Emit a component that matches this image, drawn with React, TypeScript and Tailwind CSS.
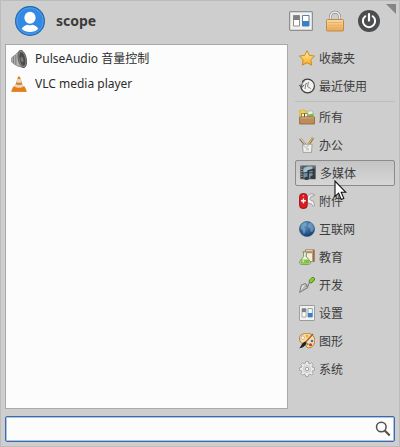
import { useState } from "react";
import type { ReactNode } from "react";

function StarIcon() {
  return (
    <svg viewBox="0 0 16 16" className="size-4 shrink-0" aria-hidden="true">
      <defs>
        <linearGradient id="star" x1="0" y1="0" x2="0" y2="1">
          <stop offset="0" stopColor="#fff0a0" />
          <stop offset="1" stopColor="#f9a825" />
        </linearGradient>
      </defs>
      <path d="M8 .6l2.3 4.8 5.3.7-3.8 3.7.9 5.4L8 12.7l-4.7 2.5.9-5.4L.4 6.1l5.3-.7z" fill="url(#star)" stroke="#d08a1c" strokeWidth="1" strokeLinejoin="round" />
    </svg>
  );
}

function HistoryIcon() {
  return (
    <svg viewBox="0 0 16 16" className="size-4 shrink-0" fill="none" aria-hidden="true">
      <circle cx="8.6" cy="8" r="6.8" fill="#f1f1ee" stroke="#3c3c3c" strokeWidth="1.2" />
      <path d="M1.8 3.4l1.6 6" stroke="#cecece" strokeWidth="2.2" />
      <path d="M0 6.8l2.6 3 2.6-3M2.6 9.4C2.4 6 3.6 4 5.6 3" stroke="#555" strokeWidth="1" />
      <path d="M9.4 3.8L8.6 8.6l3.2 2M6.8 5.6h1.4M6.8 5.6L6 11" stroke="#777" strokeWidth=".9" />
    </svg>
  );
}

function AllIcon() {
  return (
    <svg viewBox="0 0 16 16" className="size-4 shrink-0" aria-hidden="true">
      <path d="M.6 1.2l2 .8L4.6.4 5.6 2l2-.2-.8 2.4.4 2.8H.8z" fill="#f3d43c" stroke="#c9a11f" strokeWidth=".5" />
      <path d="M2.2 4.2h11.3v4H2.2z" fill="#6b5130" />
      <path d="M2.8 4.8H5v3H2.8zM6 4.8h2v3H6z" fill="#f5f0df" />
      <path d="M9.2 2h4.4l1 5.5H8.2z" fill="#edf2e6" stroke="#9aa58d" strokeWidth=".6" />
      <path d="M8.5 5.6l6-1v3.2h-6z" fill="#83b849" />
      <path d="M.6 8h14.9v7H.6z" fill="#bd8c58" stroke="#8d6638" strokeWidth=".8" />
      <path d="M1.3 8.9h13.4" stroke="#dfbb8a" strokeWidth=".8" />
    </svg>
  );
}

function OfficeIcon() {
  return (
    <svg viewBox="0 0 16 16" className="size-4 shrink-0" fill="none" aria-hidden="true">
      <path d="M1 1.4l6.4 7.8" stroke="#77705f" strokeWidth="2.4" />
      <path d="M1.2 1.2l6 7.3" stroke="#e2d3a8" strokeWidth="1.1" />
      <path d="M14 .8L8.4 9.5" stroke="#8d6a2c" strokeWidth="2.3" />
      <path d="M13.8.8L8.4 8.8" stroke="#eebf58" strokeWidth="1.1" />
      <path d="M3.5 7.2h9.6l-.6 8.2H4.1z" fill="#f4f4f4" fillOpacity=".9" stroke="#9a9a9a" strokeWidth=".9" />
      <path d="M3.8 7.8l3.4 3L9.6 8" stroke="#b0ada5" strokeWidth=".9" />
      <path d="M7.3 11h2.6v2.4H7.3z" fill="#c4c4c4" />
    </svg>
  );
}

function MediaIcon() {
  return (
    <svg viewBox="0 0 16 16" className="size-4 shrink-0" aria-hidden="true">
      <path d="M.4.6h15.2v13.6H.4z" fill="#34383b" />
      <path d="M3.4 1.4h9.2v5.8H3.4zM3.4 8.2h9.2v5.2H3.4z" fill="#6f91a5" />
      <path d="M3.4 4l4-2.6h5.2v2L5 7.2H3.4z" fill="#a9c0cc" />
      <path d="M1.9 1.2v12.6M14.1 1.2v10" stroke="#c9cccd" strokeWidth="1.1" strokeDasharray="1.3 1.1" />
      <path d="M8.2 12.8V5.8l5.8-1.4v7.4" fill="none" stroke="#262b2f" strokeWidth="1.3" />
      <ellipse cx="6.6" cy="13.4" rx="2.3" ry="1.7" fill="#343a3f" />
      <ellipse cx="12.6" cy="12.2" rx="2.3" ry="1.7" fill="#343a3f" />
    </svg>
  );
}

function KnifeIcon() {
  return (
    <svg viewBox="0 0 16 16" className="size-4 shrink-0" aria-hidden="true">
      <path d="M8 6L9 2.6l3-1.8 3.4.6-.6 1.6-2.6.2-1.6 3 1.4 1.4 2.4.6 1.4 4.4-1.8.6-1.6-2.4L8 9.8z" fill="#f3f3f2" stroke="#909090" strokeWidth=".8" />
      <rect x=".6" y=".6" width="7.6" height="14.8" rx="3" fill="#dc1e20" stroke="#990c12" strokeWidth=".9" />
      <path d="M4.4 5.4v4.8M2 7.8h4.8" stroke="#fff" strokeWidth="1.4" />
      <circle cx="4.4" cy="2.8" r=".7" fill="#ffb7b7" />
    </svg>
  );
}

function GlobeIcon() {
  return (
    <svg viewBox="0 0 16 16" className="size-4 shrink-0" aria-hidden="true">
      <defs>
        <radialGradient id="globe" cx=".4" cy=".25" r=".8">
          <stop offset="0" stopColor="#5e93c4" />
          <stop offset="1" stopColor="#123a6c" />
        </radialGradient>
      </defs>
      <circle cx="8" cy="8" r="7.6" fill="url(#globe)" stroke="#2b5785" strokeWidth=".6" />
      <path d="M2.4 3.8l3-2.2 2.4.4-.6 2.2L5 6.2l1.8 1.8L6 11.2l-1.2 2.2-1-3.6L1.4 7zM9.4 2.6l2.6-.8 2.4 2.8.6 3.2-1.8 3.4-1.6-.6-.6-3.2-2-1.4z" fill="#86b3cf" opacity=".6" />
    </svg>
  );
}

function EducationIcon() {
  return (
    <svg viewBox="0 0 16 16" className="size-4 shrink-0" aria-hidden="true">
      <path d="M6.4.8h9v11.8H8z" fill="#f3ecdd" stroke="#8f744f" strokeWidth=".8" />
      <path d="M13.4 1.2h1.8v11h-1.8z" fill="#9c6a3c" />
      <path d="M8 2.2h5v2H8z" fill="#b2845a" />
      <path d="M3.6 2.8h4.2M4.6 3v4.6L1 12c-1.2 2.2.2 3.4 1.8 3.4h6.4c2 0 3-1.4 2-3.2L7.2 7.6V3" fill="#eff6e6" stroke="#6b9149" strokeWidth=".9" />
      <path d="M2.6 10.6h7l1.2 2.2c.4 1.2-.4 1.9-1.6 1.9H2.8c-1.2 0-1.9-.8-1.4-1.9z" fill="#7fc243" />
      <circle cx="4.4" cy="12.2" r="1" fill="#dff3b9" />
    </svg>
  );
}

function DevelopIcon() {
  return (
    <svg viewBox="0 0 16 16" className="size-4 shrink-0" aria-hidden="true">
      <path d="M.6 15.4L2.4 8l4.2-1.6L9 10.6z" fill="#b4b7b3" stroke="#6a6e69" strokeWidth=".8" strokeLinejoin="round" />
      <path d="M1.4 14.2L3.2 8.8l2.8-1.2z" fill="#e9ebe7" />
      <path d="M7 9l2.2.2.2-2.4 1.8-1.2" fill="none" stroke="#777" strokeWidth="1" />
      <path d="M11.8 4.2l2-2" stroke="#4c8a14" strokeWidth="4.2" strokeLinecap="round" />
      <path d="M11.8 4l1.8-1.8" stroke="#8fcb42" strokeWidth="2.7" strokeLinecap="round" />
    </svg>
  );
}

function SettingsIcon({ large = false }: { large?: boolean }) {
  return (
    <svg viewBox="0 0 24 20" preserveAspectRatio="none" className={large ? "h-5 w-6" : "size-4 shrink-0"} aria-hidden="true">
      <rect x=".6" y=".6" width="22.8" height="18.8" rx="1" fill="#f1f1ef" stroke="#8c8f8d" strokeWidth="1.2" />
      <path d="M4.5 4.5h6v10.5h-6z" fill="#fff" stroke="#8b8e8c" strokeWidth="1" />
      <path d="M4.5 4.5h6v4.5h-6z" fill="#7d807e" />
      <path d="M13.5 4.5h6.5v10.5h-6.5z" fill="#fff" stroke="#5f7fa3" strokeWidth="1" />
      <path d="M13.5 10h6.5v5h-6.5z" fill="#377fca" />
    </svg>
  );
}

function PaletteIcon() {
  return (
    <svg viewBox="0 0 16 16" className="size-4 shrink-0" aria-hidden="true">
      <path d="M2 2C6-.8 13-.4 15.2 4.5c1.8 5-1 10.4-5.7 10.4-3 0-2-3.5-4-4.3C3.4 9.8 1 10.2.8 7.5.7 5.5-.2 3.8 2 2z" fill="#f7ddb0" stroke="#b57624" strokeWidth=".9" />
      <circle cx="3.8" cy="4.7" r="1.7" fill="#fff" stroke="#b98c48" strokeWidth=".6" />
      <circle cx="8" cy="3" r="1.5" fill="#f0b023" />
      <circle cx="13" cy="8" r="1.3" fill="#3a78bd" />
      <circle cx="11.5" cy="11.7" r="1.5" fill="#d43024" />
      <circle cx="8.5" cy="11.2" r="1.1" fill="#64a333" />
      <path d="M14 1L6 9.8" stroke="#a5651f" strokeWidth="1.5" />
      <path d="M6.2 8.4l1.5 1.4c-1 3-3.7 5.2-7.5 5.4 2.4-2 2-5.2 6-6.8z" fill="#222" />
    </svg>
  );
}

function GearIcon() {
  return (
    <svg viewBox="0 0 16 16" className="size-4 shrink-0" aria-hidden="true">
      <path d="M6.7.5h2.6l.4 2 1.2.5 1.8-1.2 1.5 1.5L13 5.1l.5 1.2 2 .4v2.6l-2 .4-.5 1.2 1.2 1.8-1.5 1.5-1.8-1.2-1.2.5-.4 2H6.7l-.4-2-1.2-.5-1.8 1.2-1.5-1.5L3 10.9l-.5-1.2-2-.4V6.7l2-.4L3 5.1 1.8 3.3l1.5-1.5L5.1 3l1.2-.5z" fill="#ebebeb" stroke="#9a9a9a" strokeWidth=".8" strokeLinejoin="round" />
      <circle cx="8" cy="8" r="3.6" fill="#dcdcdc" stroke="#bcbcbc" strokeWidth=".6" />
      <circle cx="8" cy="8" r="1.7" fill="#f6f6f6" stroke="#909090" strokeWidth=".8" />
    </svg>
  );
}

function SpeakerIcon() {
  return (
    <svg viewBox="0 0 16 20" className="h-5 w-4 shrink-0" aria-hidden="true">
      <path d="M1 8.4l3-2.2 5-4.6 4 17-6-1.4-4.5-2.6C0 13.2 0 10.4 1 8.4z" fill="#b4b4b1" stroke="#7a7a78" strokeWidth=".8" />
      <path d="M2.6 7.8v6M4.8 6.4v9" stroke="#6c6c6a" strokeWidth=".8" />
      <ellipse cx="11.3" cy="10" rx="4" ry="8.8" transform="rotate(-12 11.3 10)" fill="#8b8b89" stroke="#5a5a58" strokeWidth=".9" />
      <ellipse cx="11.4" cy="10" rx="2.8" ry="7.2" transform="rotate(-12 11.4 10)" fill="#4b4b4a" />
      <ellipse cx="11" cy="10.6" rx="1.3" ry="2.6" transform="rotate(-12 11 10.6)" fill="#7d7d7b" />
    </svg>
  );
}

function ConeIcon() {
  return (
    <svg viewBox="0 0 16 16" className="size-4 shrink-0" aria-hidden="true">
      <path d="M2.6 10.8h10.8l2 4.6H.6z" fill="#ed8009" stroke="#c86605" strokeWidth=".6" />
      <path d="M7.2.6h1.6l3.8 11.5c-2 1.6-7.2 1.6-9.2 0z" fill="#e87a10" />
      <path d="M6.4 3h3.2l1.1 3.2c-1.4.8-4 .8-5.4 0zM4.6 8.3c1.8.9 5 .9 6.8 0l.8 2.4c-2 1.3-6.4 1.3-8.4 0z" fill="#ddd8d2" />
    </svg>
  );
}

function AvatarIcon() {
  return (
    <svg viewBox="0 0 30 30" className="size-[30px]" aria-hidden="true">
      <circle cx="15" cy="15" r="14.4" fill="#348ae2" stroke="#2368af" strokeWidth="1.2" />
      <circle cx="15" cy="15" r="13.2" fill="none" stroke="#58a3ee" strokeWidth=".8" />
      <ellipse cx="15" cy="11.8" rx="5.6" ry="6" fill="#fff" />
      <path d="M6.7 22.8c1.2-2.4 4-3.5 5.8-4.1 1.6.8 3.4.8 5 0 1.8.6 4.6 1.7 5.8 4.1-4.1 4.4-12.5 4.4-16.6 0z" fill="#fff" />
    </svg>
  );
}

function LockIcon() {
  return (
    <svg viewBox="0 0 20 22" className="h-[22px] w-5" aria-hidden="true">
      <defs>
        <linearGradient id="lock" x1="0" y1="0" x2="0" y2="1">
          <stop offset="0" stopColor="#fbd9a0" />
          <stop offset="1" stopColor="#eba950" />
        </linearGradient>
      </defs>
      <path d="M5.5 11V6.6C5.5.8 14.5.8 14.5 6.6V11" fill="none" stroke="#8f918e" strokeWidth="3" />
      <path d="M5.5 11V6.6C5.5.8 14.5.8 14.5 6.6V11" fill="none" stroke="#e9eae7" strokeWidth="1.6" />
      <rect x="1.5" y="9.5" width="17" height="11.5" rx="1" fill="url(#lock)" stroke="#bd8a48" />
      <path d="M3 12.5h14M3 15.2h14M3 18h14" stroke="#e3ac66" strokeWidth=".8" />
    </svg>
  );
}

function PowerIcon() {
  return (
    <svg viewBox="0 0 24 24" className="size-6" fill="none" aria-hidden="true">
      <circle cx="12" cy="12" r="11" fill="#4c4d4f" />
      <path d="M8.3 7.2a6.1 6.1 0 1 0 7.4 0" stroke="#fff" strokeWidth="2" strokeLinecap="round" />
      <path d="M12 5v6.6" stroke="#fff" strokeWidth="2.2" strokeLinecap="round" />
    </svg>
  );
}

type Category = { name: string; icon: ReactNode };

const shortcuts: Category[] = [
  { name: "收藏夹", icon: <StarIcon /> },
  { name: "最近使用", icon: <HistoryIcon /> },
];

const categories: Category[] = [
  { name: "所有", icon: <AllIcon /> },
  { name: "办公", icon: <OfficeIcon /> },
  { name: "多媒体", icon: <MediaIcon /> },
  { name: "附件", icon: <KnifeIcon /> },
  { name: "互联网", icon: <GlobeIcon /> },
  { name: "教育", icon: <EducationIcon /> },
  { name: "开发", icon: <DevelopIcon /> },
  { name: "设置", icon: <SettingsIcon /> },
  { name: "图形", icon: <PaletteIcon /> },
  { name: "系统", icon: <GearIcon /> },
];

function CategoryButton({ item, active, onSelect }: { item: Category; active: boolean; onSelect: () => void }) {
  return (
    <button
      type="button"
      aria-pressed={active}
      onClick={onSelect}
      className={
        "relative flex h-[26px] w-full items-center gap-1 rounded-[2px] border text-left " +
        (active ? "border-[#8b8b8b] bg-linear-to-b from-[#c4c4c4] to-[#d6d6d6] pl-1" : "border-transparent pl-[3px]")
      }
    >
      {item.icon}
      <span className="pt-0.5">{item.name}</span>
      {active && (
        <svg viewBox="0 0 13 21" className="pointer-events-none absolute top-[19px] left-[38px] z-10 h-[21px] w-[13px]" aria-hidden="true">
          <path d="M1 1v15.5l3.6-3.3 2.6 6.3 2.6-1.1-2.6-6.1h4.7z" fill="#fff" stroke="#111" strokeWidth="1.1" />
        </svg>
      )}
    </button>
  );
}

export default function App() {
  const [selected, setSelected] = useState("多媒体");
  const [query, setQuery] = useState("");

  return (
    <main className="relative flex min-h-screen flex-col border border-[#bcbcbc] bg-[#cecece] px-1 pb-1 font-['Noto_Sans','Noto_Sans_CJK_SC',sans-serif] text-xs text-[#3c3c3c]">
      <header className="flex h-[43px] shrink-0 items-center justify-between pr-[14px] pb-1 pl-[10px]">
        <div className="flex items-center gap-[11px]">
          <AvatarIcon />
          <h1 className="text-sm font-bold">scope</h1>
        </div>
        <div className="flex items-center gap-3">
          <button type="button" aria-label="设置"><SettingsIcon large /></button>
          <button type="button" aria-label="锁定"><LockIcon /></button>
          <button type="button" aria-label="关机"><PowerIcon /></button>
        </div>
      </header>
      <svg viewBox="0 0 10 10" className="absolute top-[3px] right-[3px] size-[10px]" aria-hidden="true">
        <path d="M0 0h10v10z" fill="#858585" />
      </svg>

      <div className="flex grow gap-[7px]">
        <ul className="grow border border-[#a9a9a9] bg-[#fcfcfc] pt-px text-[#2c2c2c]">
          <li>
            <button type="button" className="flex h-[25px] w-full items-center gap-2 pl-[5px] text-left">
              <SpeakerIcon />
              <span>PulseAudio 音量控制</span>
            </button>
          </li>
          <li>
            <button type="button" className="flex h-[25px] w-full items-center gap-2 pl-[5px] text-left">
              <ConeIcon />
              <span>VLC media player</span>
            </button>
          </li>
        </ul>
        <nav className="flex w-[100px] shrink-0 flex-col gap-[2px] pt-px">
          {shortcuts.map((item) => (
            <CategoryButton key={item.name} item={item} active={selected === item.name} onSelect={() => setSelected(item.name)} />
          ))}
          <hr className="border-t border-[#bdbdbd]" />
          {categories.map((item) => (
            <CategoryButton key={item.name} item={item} active={selected === item.name} onSelect={() => setSelected(item.name)} />
          ))}
        </nav>
      </div>

      <div className="mt-[7px] flex h-[26px] shrink-0 items-center rounded-[2px] border border-[#3e6ba5] bg-[#fcfcfc] pr-[3px] shadow-[inset_0_0_0_1px_#a9c4e6]">
        <input
          type="text"
          aria-label="搜索"
          value={query}
          onChange={(event) => setQuery(event.target.value)}
          className="min-w-0 grow bg-transparent px-2 outline-none"
        />
        <svg viewBox="0 0 16 16" className="size-4 shrink-0" fill="none" stroke="#55504c" aria-hidden="true">
          <circle cx="6.3" cy="6" r="4.8" strokeWidth="1.5" />
          <path d="M9.7 9.5l5 5" strokeWidth="2.1" />
        </svg>
      </div>
    </main>
  );
}
